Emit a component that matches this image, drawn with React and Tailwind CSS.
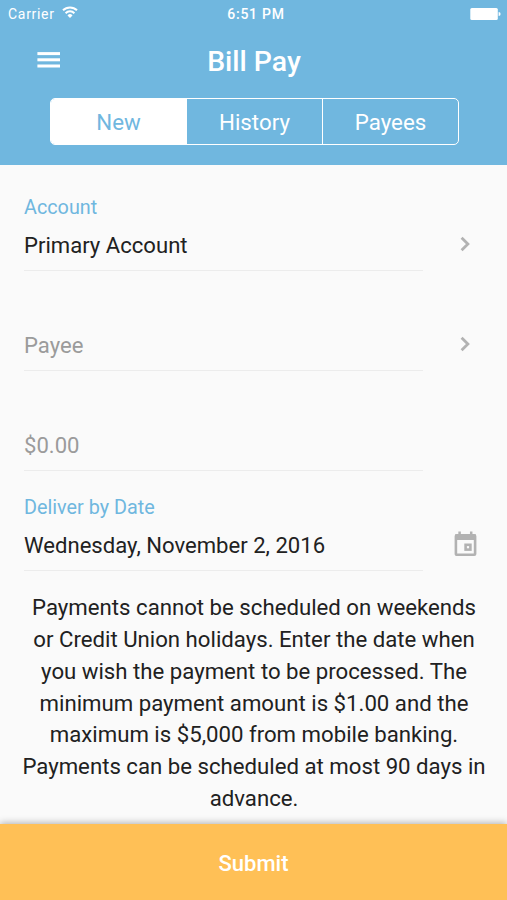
import React, { useState } from 'react';

const tabs = ['New', 'History', 'Payees'];

function MenuIcon() {
  return (
    <svg width="24" height="16" viewBox="0 0 24 16" fill="currentColor">
      <rect x="0.4" y="0.1" width="22.6" height="3" />
      <rect x="0.4" y="6.3" width="22.6" height="3" />
      <rect x="0.4" y="12.5" width="22.6" height="3" />
    </svg>
  );
}

function ChevronIcon() {
  return (
    <svg width="10" height="16" viewBox="0 0 10 16" fill="none" stroke="currentColor" strokeWidth="2.8">
      <path d="M1.6 1.8 7.9 8l-6.3 6.2" />
    </svg>
  );
}

function CalendarIcon() {
  return (
    <svg width="24" height="26" viewBox="0 0 24 26" fill="none" stroke="currentColor">
      <path d="M6.6 0.6v4M18.2 0.6v4" strokeWidth="2.5" />
      <rect x="2.9" y="4.4" width="19.2" height="19.4" rx="0.8" strokeWidth="2.6" />
      <path d="M2.2 6.2h20.6" strokeWidth="5.6" />
      <rect x="12.6" y="13.8" width="4.8" height="4.8" strokeWidth="2.6" />
    </svg>
  );
}

function StatusBar() {
  return (
    <div className="relative flex h-7 items-center justify-between pl-2 pr-1.5 text-[14px] leading-none">
      <div className="flex items-center gap-[7px] tracking-[0.7px]">
        <span>Carrier</span>
        <svg className="-mt-1" width="16" height="12" viewBox="0 0 16 12" fill="none" stroke="currentColor" strokeWidth="2">
          <path d="M1 4.3a10 10 0 0 1 14 0" />
          <path d="M3.6 7.2a6.2 6.2 0 0 1 8.8 0" />
          <path d="M8 11.9 5.5 9.4a3.5 3.5 0 0 1 5 0z" fill="currentColor" stroke="none" />
        </svg>
      </div>
      <span className="absolute inset-x-0 pl-[5px] text-center font-medium tracking-[0.75px]">6:51 PM</span>
      <svg className="-mt-px" width="31" height="12" viewBox="0 0 31 12" fill="currentColor">
        <rect x="0.3" y="0" width="27.5" height="12" rx="1.5" />
        <path d="M28.6 4a2 2 0 0 1 0 4z" />
      </svg>
    </div>
  );
}

function Field({ label, value, placeholder, icon }) {
  return (
    <div className="flex h-[100px] items-end">
      <div className="w-[399px] border-b border-[#ececec] pb-[10px]">
        {label && <div className="mb-2 text-[19.8px] leading-7 text-[#6fb7df]">{label}</div>}
        <div className={`text-[22.1px] leading-[30px] ${value ? 'text-[#212121]' : 'text-[#9b9b9b]'}`}>
          {value || placeholder}
        </div>
      </div>
      <div className="mb-[13px] flex h-7 w-[84px] items-center justify-center text-[#b2b2b2]">{icon}</div>
    </div>
  );
}

function App() {
  const [tab, setTab] = useState('New');

  return (
    <div className="flex h-screen w-full flex-col overflow-hidden bg-[#fafafa] font-['Roboto',sans-serif] text-[#212121]">
      <header className="h-[164.5px] shrink-0 bg-[#70b7df] text-white">
        <StatusBar />
        <div className="relative flex h-[66px] items-center justify-center pt-0.5 pl-[1px]">
          <button className="absolute left-[37px] top-6"><MenuIcon /></button>
          <h1 className="text-[28.4px] font-medium">Bill Pay</h1>
        </div>
        <div className="ml-[50px] mt-1 flex h-[47px] w-[409px] overflow-hidden rounded-[5px] border border-white">
          {tabs.map((t) => (
            <button
              key={t}
              onClick={() => setTab(t)}
              className={`flex-1 border-r border-white pt-[3px] text-[22.3px] last:border-r-0 ${tab === t ? 'bg-white text-[#70b7df]' : ''}`}
            >
              {t}
            </button>
          ))}
        </div>
      </header>

      <main className="flex-1 pl-6 pt-[6px]">
        <Field label="Account" value="Primary Account" icon={<ChevronIcon />} />
        <Field placeholder="Payee" icon={<ChevronIcon />} />
        <Field placeholder="$0.00" />
        <Field label="Deliver by Date" value="Wednesday, November 2, 2016" icon={<CalendarIcon />} />
        <p className="-ml-6 mt-[21.8px] pl-px text-center text-[22.2px] leading-[31.8px]">
          Payments cannot be scheduled on weekends<br />
          or Credit Union holidays. Enter the date when<br />
          you wish the payment to be processed. The<br />
          minimum payment amount is $1.00 and the<br />
          maximum is $5,000 from mobile banking.<br />
          Payments can be scheduled at most 90 days in<br />
          advance.
        </p>
      </main>

      <button className="h-[76px] shrink-0 bg-[#ffc056] pt-0.5 text-[22px] font-medium text-white shadow-[0_-1px_7px_rgba(0,0,0,0.3)]">
        Submit
      </button>
    </div>
  );
}

export default App;
